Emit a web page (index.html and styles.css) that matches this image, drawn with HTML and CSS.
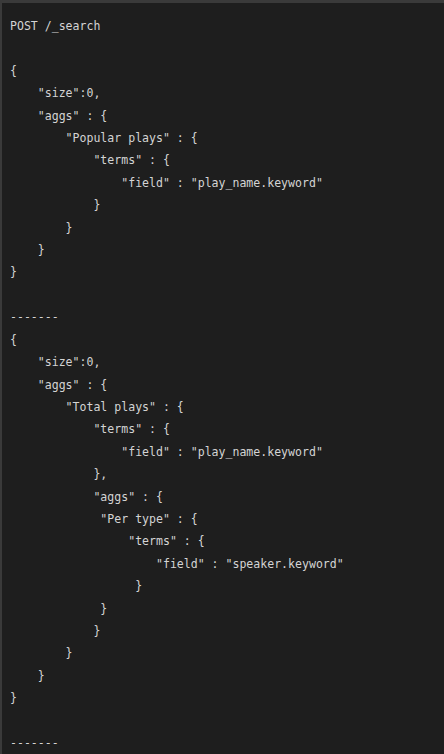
FILE: index.html
```html
<!DOCTYPE html>
<html lang="en">
<head>
<meta charset="utf-8">
<title>POST /_search</title>
<link rel="stylesheet" href="styles.css">
</head>
<body>
<pre class="code">POST /_search

{
    "size":0,
    "aggs" : {
        "Popular plays" : {
            "terms" : {
                "field" : "play_name.keyword"
            }
        }
    }
}

-------
{
    "size":0,
    "aggs" : {
        "Total plays" : {
            "terms" : {
                "field" : "play_name.keyword"
            },
            "aggs" : {
             "Per type" : {
                 "terms" : {
                     "field" : "speaker.keyword"
                  }
             }
            }
        }
    }
}

-------
</pre>
</body>
</html>
```

FILE: styles.css
```css
html, body {
  margin: 0;
  padding: 0;
  background: #1e1e1e;
}
.code {
  margin: 0;
  min-height: 754px;
  box-sizing: border-box;
  background: #1e1e1e;
  color: #d4d4d4;
  border-top: 3px solid #3a3a3a;
  border-left: 2px solid #3a3a3a;
  padding: 12px 8px 0 8px;
  font-family: "DejaVu Sans Mono", "Liberation Mono", monospace;
  font-size: 11.55px;
  line-height: 22.4px;
  white-space: pre;
}
```
